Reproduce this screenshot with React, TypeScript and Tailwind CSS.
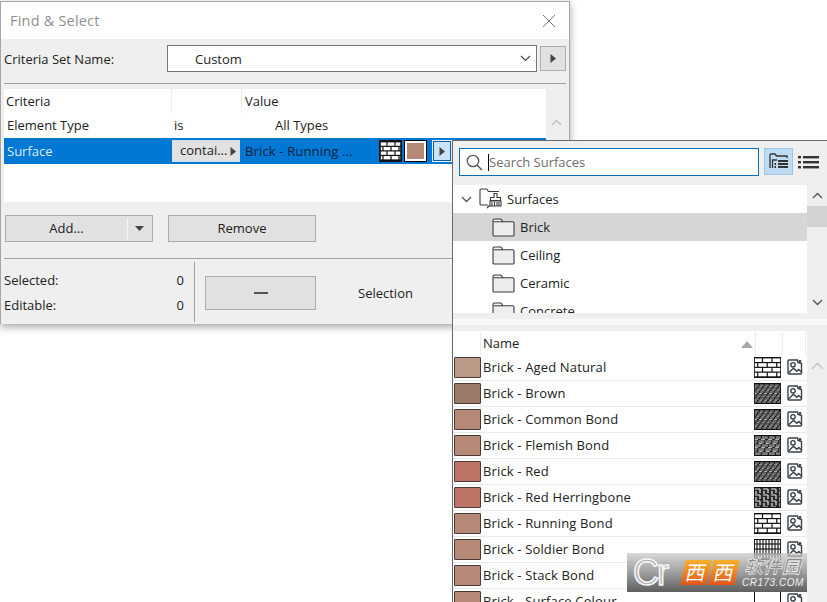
import React from "react";

const FONT = "font-['Open_Sans','Noto_Sans',sans-serif]";

type BrickKind = "white" | "dense" | "dense2" | "flemish" | "herring" | "soldier" | "blank";

function Brick({ kind, w = 27, h = 21 }: { kind: BrickKind; w?: number; h?: number }) {
  const els: React.ReactNode[] = [];
  if (kind === "white") {
    const rh = h / 4.4;
    const sp = w < 25 ? 8 : 9.500;
    for (let r = 0; r < 5; r++) {
      const y = r * rh + 0.8;
      els.push(<line key={"h" + r} x1={0} x2={w} y1={y} y2={y} stroke="#111" strokeWidth={1.2} />);
      const off = r % 2 ? sp / 2 - 1 : sp - 1;
      for (let x = off; x < w; x += sp) els.push(<line key={r + "v" + x} x1={x} x2={x} y1={y} y2={y + rh} stroke="#111" strokeWidth={1.2} />);
    }
  } else if (kind === "dense" || kind === "dense2" || kind === "flemish") {
    els.push(<rect key="bg" width={w} height={h} fill="#111" />);
    const rows = kind === "flemish" ? 5 : 6;
    const rh = (h - 1) / rows;
    const bw = kind === "flemish" ? 7 : 5;
    for (let r = 0; r < rows; r++) {
      const y = r * rh + 1.2;
      for (let x = (r % 2 ? -bw / 2 : 0) + 0.8; x < w; x += bw) {
        els.push(<rect key={r + "b" + x} x={x} y={y} width={bw - 1} height={rh - 1} fill={kind === "flemish" ? "#7a7a7a" : "#6a6a6a"} />);
      }
      els.push(<line key={"w" + r} x1={0} x2={w} y1={y + rh - 0.6} y2={y + rh - 0.6} stroke="#e8e8e8" strokeWidth={0.8} strokeDasharray={kind === "flemish" ? "4 3" : "3 2"} strokeDashoffset={r % 2 ? 2.500 : 0} />);
    }
  } else if (kind === "herring") {
    els.push(<rect key="bg" width={w} height={h} fill="#2a2a2a" />);
    for (let y = 1; y < h; y += 6) {
      for (let x = 0; x < w; x += 8) {
        els.push(<path key={x + "p" + y} d={`M${x + 1} ${y + 1}h5M${x + 6} ${y + 1}v4M${x + 2} ${y + 3}v3`} stroke="#e4e4e4" strokeWidth={1.2} fill="none" />);
      }
    }
  } else if (kind === "soldier") {
    for (let x = 0; x <= w; x += 3) els.push(<line key={"v" + x} x1={x} x2={x} y1={0} y2={h} stroke="#222" strokeWidth={1.2} />);
    for (let y = 0; y <= h; y += 5) els.push(<line key={"h" + y} x1={0} x2={w} y1={y} y2={y} stroke="#222" strokeWidth={1.3} />);
  }
  return (
    <svg width={w} height={h} viewBox={`0 0 ${w} ${h}`} className="block shrink-0 bg-white">
      {els}
      <path d={`M0.500 0.500H${w - 0.5}M0.500 ${h - 0.5}H${w - 0.5}`} stroke="#111" strokeWidth={1} />
      <path d={`M0.500 0V${h}M${w - 0.5} 0V${h}`} stroke="#111" strokeWidth={kind === "blank" ? 1 : 0.8} />
    </svg>
  );
}

function ImageIcon() {
  return (
    <svg width="16" height="16" viewBox="0 0 16 16" fill="none" stroke="#39424a" strokeWidth="1.400" className="block">
      <path d="M1 2c0-.6.4-1 1-1h8.500l.5 2.500 3.500 1V14c0 .6-.4 1-1 1H2c-.6 0-1-.4-1-1z" />
      <circle cx="6" cy="5.800" r="2.200" />
      <path d="M1.500 14l5-4.700 3.300 3 2-1.800 3 3" />
      <circle cx="13" cy="2.400" r="1.400" fill="#39424a" stroke="none" />
    </svg>
  );
}

function Folder() {
  return (
    <svg width="23" height="19" viewBox="0 0 23 19" className="block shrink-0">
      <path d="M1 17V2.400C1 1.600 1.600 1 2.400 1h6c.6 0 1 .3 1.400 1l1 1.800h9.800c.8 0 1.400.6 1.400 1.400V17c0 .6-.5 1-1 1H2c-.6 0-1-.4-1-1z" fill="#ededed" stroke="#3d3d3d" strokeWidth="1.1" />
      <path d="M1.500 3.800h9.500" stroke="#3d3d3d" strokeWidth="1" />
    </svg>
  );
}

function Play({ className = "" }: { className?: string }) {
  return (
    <svg width="6" height="9" viewBox="0 0 6 9" className={"block " + className}>
      <path d="M0.500 0v9L6 4.500z" fill="#444" />
    </svg>
  );
}

function VChevron({ up }: { up?: boolean }) {
  return (
    <svg width="11" height="7" viewBox="0 0 11 7" fill="none" stroke="#555" strokeWidth="1.4" className="block">
      <path d={up ? "M1 6l4.500-4.500L10 6" : "M1 1l4.500 4.500L10 1"} />
    </svg>
  );
}

const rows: { name: string; color: string; kind: BrickKind }[] = [
  { name: "Brick - Aged Natural", color: "#bb9a88", kind: "white" },
  { name: "Brick - Brown", color: "#9a7a69", kind: "dense" },
  { name: "Brick - Common Bond", color: "#b58978", kind: "dense2" },
  { name: "Brick - Flemish Bond", color: "#b58978", kind: "flemish" },
  { name: "Brick - Red", color: "#bc7467", kind: "dense" },
  { name: "Brick - Red Herringbone", color: "#bc7467", kind: "herring" },
  { name: "Brick - Running Bond", color: "#b58978", kind: "white" },
  { name: "Brick - Soldier Bond", color: "#b58978", kind: "soldier" },
  { name: "Brick - Stack Bond", color: "#b58978", kind: "dense" },
  { name: "Brick - Surface Colour", color: "#b58978", kind: "blank" },
];

function Dialog() {
  return (
    <div className="mt-px w-[570px] h-[323px] border-x border-t border-[#a6a6a6] bg-[#efefef] shadow-[0_3px_8px_rgba(0,0,0,0.35)] flex flex-col text-[13px] text-[#222]">
      <div className="h-[37px] shrink-0 bg-white flex items-center justify-between pl-[9px] pr-[13px]">
        <span className="text-[14.5px] text-[#8f8f8f] tracking-[0.2px] pt-px">Find &amp; Select</span>
        <svg width="14" height="14" viewBox="0 0 14 14" stroke="#777" strokeWidth="1" className="block"><path d="M1 1l12 12M13 1L1 13" /></svg>
      </div>
      <div className="flex items-center pl-[3px] pt-[6px] h-[33px] shrink-0">
        <span className="w-[163px] pt-[2px]">Criteria Set Name:</span>
        <div className="w-[370px] h-[27px] bg-white border border-[#767676] flex items-center justify-between pl-[27px] pr-[5px]">
          <span className="pt-[2px]">Custom</span>
          <svg width="11" height="7" viewBox="0 0 11 7" fill="none" stroke="#444" strokeWidth="1.1"><path d="M1 1l4.500 4.500L10 1" /></svg>
        </div>
        <div className="ml-[3px] w-[26px] h-[25px] bg-[#e1e1e1] border border-[#adadad] flex items-center justify-center"><Play /></div>
      </div>
      <div className="mt-[11px] ml-[3px] mr-[3px] h-px bg-[#a0a0a0] shrink-0" />
      <div className="mt-[5px] ml-[3px] flex shrink-0">
        <div className="w-[542px] h-[113px] bg-white flex flex-col">
          <div className="h-[24px] flex items-center">
            <span className="w-[168px] pl-[2px] pt-px h-full flex items-center border-r border-[#ececec]">Criteria</span>
            <span className="w-[70px] h-full border-r border-[#ececec]" />
            <span className="pl-[3px] pt-px">Value</span>
          </div>
          <div className="h-[25px] flex items-center">
            <span className="w-[170px] pl-[3px]">Element Type</span>
            <span className="w-[101px]">is</span>
            <span>All Types</span>
          </div>
          <div className="h-[26px] bg-[#0078d4] flex items-center">
            <span className="w-[168px] pl-[3px] pt-px text-[#dcecf9]">Surface</span>
            <div className="w-[68px] h-[22px] bg-[#e1e1e1] border border-[#cfe0ee] flex items-center pl-[7px] gap-[3px]">
              <span>contai...</span>
              <Play />
            </div>
            <span className="ml-[5px] w-[134px] pt-[2px] text-[#0d2240] tracking-[0.15px]">Brick - Running ...</span>
            <div className="border border-[#111]"><Brick kind="white" w={21} h={20} /></div>
            <div className="ml-[2px] w-[23px] h-[22px] border border-black bg-white p-[2px]"><div className="w-full h-full bg-[#b58978]" /></div>
            <div className="ml-[5px] w-[20px] h-[22px] bg-[#cce4f7] border border-[#e4f1fb] outline outline-1 outline-[#0a5fa3] -outline-offset-2 flex items-center justify-center"><Play /></div>
          </div>
        </div>
        <div className="w-[20px] flex justify-center pt-[30px]">
          <svg width="11" height="7" viewBox="0 0 11 7" fill="none" stroke="#c4c4c4" strokeWidth="1.6"><path d="M1 6l4.500-4.500L10 6" /></svg>
        </div>
      </div>
      <div className="mt-[13px] ml-[4px] flex shrink-0">
        <div className="w-[148px] h-[27px] bg-[#e1e1e1] border border-[#adadad] flex items-center">
          <span className="w-[121px] text-center pt-px">Add...</span>
          <span className="w-px h-[22px] bg-[#f4f4f4]" />
          <svg width="9" height="5" viewBox="0 0 9 5" className="ml-[7px]"><path d="M0 0h9L4.500 5z" fill="#444" /></svg>
        </div>
        <div className="ml-[15px] w-[148px] h-[27px] bg-[#e1e1e1] border border-[#adadad] flex items-center justify-center pt-px">Remove</div>
      </div>
      <div className="mt-[16px] ml-[3px] h-px bg-[#a0a0a0] shrink-0" />
      <div className="flex flex-1 pl-[3px] pt-[3px]">
        <div className="w-[181px] pr-[1px] flex flex-col pt-[10px] gap-[7px]">
          <div className="flex justify-between h-[18px] items-center"><span>Selected:</span><span>0</span></div>
          <div className="flex justify-between h-[18px] items-center"><span>Editable:</span><span>0</span></div>
        </div>
        <div className="ml-[9px] w-px h-[60px] bg-[#a0a0a0]" />
        <div className="ml-[10px] mt-[14px] w-[111px] h-[34px] bg-[#e1e1e1] border border-[#adadad] flex items-center justify-center">
          <span className="w-[14px] h-[1.5px] bg-[#555]" />
        </div>
        <span className="ml-[42px] mt-[22px]">Selection</span>
      </div>
    </div>
  );
}

function Popover() {
  return (
    <div className="absolute left-[452px] top-[140px] w-[375px] h-[462px] border-l border-t border-[#6a6a6a] bg-[#efefef] flex flex-col text-[13px] text-[#222]">
      <div className="h-[44px] shrink-0 pl-[6px] pt-[7px] flex items-start">
        <div className="w-[300px] h-[28px] bg-white border border-[#0a6fb8] flex items-center pl-[6px]">
          <svg width="17" height="17" viewBox="0 0 17 17" fill="none" stroke="#555" strokeWidth="1.3" className="block shrink-0"><circle cx="7" cy="7" r="5.700" /><path d="M11.200 11.200l4.800 4.800" /></svg>
          <span className="ml-[5px] w-px h-[17px] bg-black shrink-0" />
          <span className="text-[#6d6d6d] pt-px">Search Surfaces</span>
        </div>
        <div className="ml-[5px] w-[29px] h-[27px] bg-[#bfdcf3] border border-[#9cc7e8] flex items-center justify-center">
          <svg width="20" height="17" viewBox="0 0 20 17" fill="none" stroke="#333" strokeWidth="1.3"><path d="M1 15V2c0-.6.4-1 1-1h4l1.500 2H18v2" /><path d="M3.500 15V7h4.500" /><path d="M9 8h10M9 11h10M9 14h10M5.500 11H7M5.500 14H7" strokeWidth="2" /></svg>
        </div>
        <div className="ml-[5px] h-[27px] flex items-center">
          <svg width="21" height="14" viewBox="0 0 21 14" fill="#333"><rect x="0" y="1" width="3" height="2.400" /><rect x="5" y="1" width="16" height="2.400" /><rect x="0" y="6" width="3" height="2.400" /><rect x="5" y="6" width="16" height="2.400" /><rect x="0" y="11" width="3" height="2.400" /><rect x="5" y="11" width="16" height="2.400" /></svg>
        </div>
      </div>
      <div className="h-[128px] shrink-0 flex">
        <div className="w-[354px] bg-white overflow-hidden flex flex-col">
          <div className="h-[28px] shrink-0 flex items-center pl-[8px]">
            <VChevron />
            <svg width="23" height="22" viewBox="0 0 23 22" fill="none" stroke="#3d3d3d" strokeWidth="1.100" className="ml-[7px] block shrink-0">
              <path d="M1 16V2.200C1 1.500 1.500 1 2.200 1h5c.5 0 .9.300 1.200.8l1 1.700H20" />
              <path d="M1 16c0 .6.400 1 1 1h7" />
              <path d="M15 5.500h3v4h3.500v3H11.500v-3H15z" />
              <path d="M11 13h11v5h-11zM8 20l3-3" />
              <path d="M13 14v4M15.500 14v4M18 14v4M20 14v4" />
            </svg>
            <span className="ml-[5px] pt-[2px]">Surfaces</span>
          </div>
          {["Brick", "Ceiling", "Ceramic", "Concrete"].map((n, i) => (
            <div key={n} className={"h-[28px] shrink-0 flex items-center pl-[39px] " + (i === 0 ? "bg-[#d6d6d6]" : "")}>
              <Folder />
              <span className="ml-[5px] pt-[2px]">{n}</span>
            </div>
          ))}
        </div>
        <div className="flex-1 flex flex-col items-center pt-[7px]">
          <VChevron up />
          <div className="mt-[7px] w-full h-[21px] bg-[#d2d2d2]" />
          <div className="mt-[72px]"><VChevron /></div>
        </div>
      </div>
      <div className="h-[6px] shrink-0" />
      <div className="h-[6px] shrink-0 bg-[#f8f8f8]" />
      <div className="h-[6px] shrink-0" />
      <div className="flex flex-1 min-h-0">
        <div className="w-[354px] bg-white overflow-hidden flex flex-col">
          <div className="h-[24px] shrink-0 flex items-center">
            <span className="w-[28px] h-full border-r border-[#ececec]" />
            <span className="pl-[2px] pt-[2px] w-[274px] flex items-center justify-between pr-[2px]">
              Name
              <svg width="12" height="7" viewBox="0 0 12 7"><path d="M0 7h12L6 0z" fill="#a8a8a8" /></svg>
            </span>
            <span className="w-[28px] h-full border-x border-[#ececec]" />
            <span className="w-[23px] h-full border-r border-[#ececec]" />
          </div>
          {rows.map((r) => (
            <div key={r.name} className="h-[26px] shrink-0 border-b border-[#e8e8e8] flex items-center pl-px">
              <span className="w-[27px] h-[21px] shrink-0 rounded-[1px] border border-[#4a3b36]" style={{ backgroundColor: r.color }} />
              <span className="ml-[2px] w-[271px] tracking-[0.15px]">{r.name}</span>
              <Brick kind={r.kind} />
              <span className="ml-[6px] -mt-[2px]"><ImageIcon /></span>
            </div>
          ))}
        </div>
        <div className="flex-1 flex justify-center pt-[31px]">
          <svg width="13" height="8" viewBox="0 0 13 8" fill="none" stroke="#c8c8c8" strokeWidth="1.700"><path d="M1 7l5.500-5.500L12 7" /></svg>
        </div>
      </div>
    </div>
  );
}

function Watermark() {
  return (
    <div className="absolute left-[627px] top-[553px] w-[180px] h-[39px] bg-gradient-to-b from-[#c8c8c8]/70 via-[#9a9a9a]/95 to-[#5f5f5f] flex items-center overflow-hidden font-['Liberation_Sans','Noto_Sans_CJK_SC',sans-serif]">
      <span className="ml-[6px] w-[50px] text-[36px] leading-[38px] text-[#b4b4b4] [-webkit-text-stroke:1.5px_#f6f6f6] tracking-[-2px]">Cr</span>
      <div className="flex gap-[2px]">
        <div className="w-[26px] h-[25px] bg-gradient-to-b from-[#f7b02e] to-[#df5519] -skew-x-12 flex items-center justify-center text-white text-[20px] leading-none">西</div>
        <div className="w-[26px] h-[25px] bg-gradient-to-b from-[#f7b02e] to-[#df5519] -skew-x-12 flex items-center justify-center text-white text-[20px] leading-none">西</div>
      </div>
      <div className="ml-[5px] flex flex-col items-center">
        <span className="text-[18px] leading-[20px] italic font-bold text-[#8a8a8a] [-webkit-text-stroke:0.6px_#f2f2f2] tracking-[1px]">软件园</span>
        <span className="text-[10px] leading-[12px] italic text-[#f0f0f0] tracking-[0.5px]">CR173.COM</span>
      </div>
    </div>
  );
}

export default function App() {
  return (
    <div className={"relative w-[827px] h-[602px] overflow-hidden bg-white " + FONT}>
      <Dialog />
      <Popover />
      <Watermark />
    </div>
  );
}
